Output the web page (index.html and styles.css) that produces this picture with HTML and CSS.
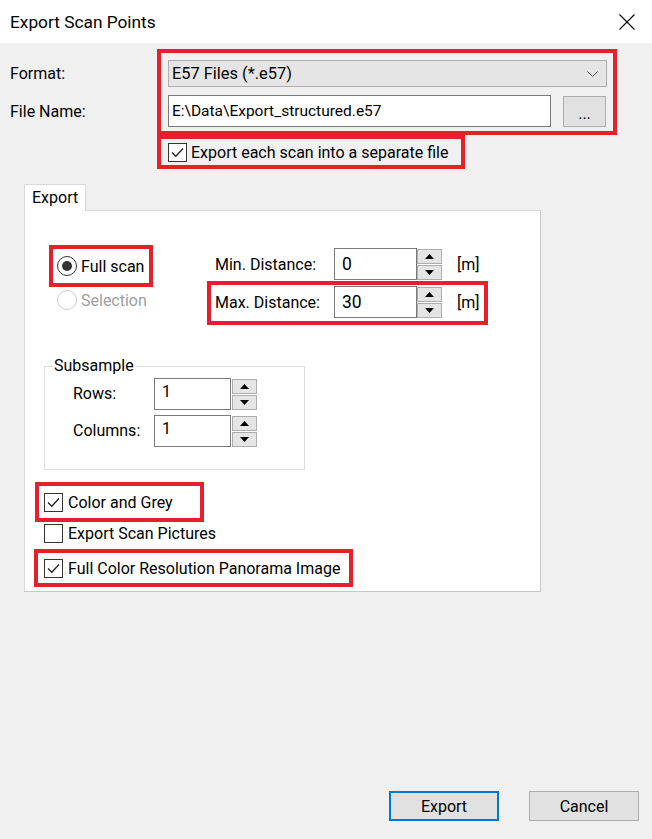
FILE: index.html
```html
<!DOCTYPE html>
<html>
<head>
    <meta charset="UTF-8">
    <title>Export Scan Points</title>
    <link rel="stylesheet" href="styles.css">
</head>
<body>
    <div class="dialog">
        <div class="titlebar">
            <span class="title">Export Scan Points</span>
            <svg class="close-icon" width="16" height="16" viewBox="0 0 16 16">
                <path d="M0.5 0.5 L15.5 15.5 M15.5 0.5 L0.5 15.5" stroke="#000" stroke-width="1.1" fill="none"/>
            </svg>
        </div>

        <!-- format / file name -->
        <div class="file-section">
            <div class="file-labels">
                <div class="field-label combo-h">Format:</div>
                <div class="field-label input-h">File Name:</div>
            </div>
            <div class="hl file-box">
                <div class="combo">
                    <span>E57 Files (*.e57)</span>
                    <svg width="11" height="6" viewBox="0 0 11 6">
                        <path d="M0.5 0.5 L5.5 5.5 L10.5 0.5" stroke="#555" stroke-width="1" fill="none"/>
                    </svg>
                </div>
                <div class="file-row">
                    <div class="textbox file-input">E:\Data\Export_structured.e57</div>
                    <div class="btn browse">...</div>
                </div>
            </div>
        </div>

        <div class="hl separate-box">
            <span class="check">
                <svg width="17" height="17" viewBox="0 0 17 17"><path d="M3 8.5 L6.8 12.3 L14 4.5" stroke="#222" stroke-width="1.3" fill="none"/></svg>
            </span>
            <span>Export each scan into a separate file</span>
        </div>

        <!-- tab -->
        <div class="tabs">
            <div class="tab">Export</div>
        </div>
        <div class="tab-panel">
            <div class="scan-row">
                <div class="scan-mode">
                    <div class="hl mode-box">
                        <span class="radio on"></span>
                        <span>Full scan</span>
                    </div>
                    <div class="mode-row disabled">
                        <span class="radio"></span>
                        <span>Selection</span>
                    </div>
                </div>
                <div class="distances">
                    <div class="dist-row min-row">
                        <span class="dist-label">Min. Distance:</span>
                        <div class="textbox dist-input">0</div>
                        <div class="spin">
                            <span class="spin-btn"><svg width="9" height="5" viewBox="0 0 9 5"><path d="M0 5 L4.5 0 L9 5 Z" fill="#000"/></svg></span>
                            <span class="spin-btn"><svg width="9" height="5" viewBox="0 0 9 5"><path d="M0 0 L4.5 5 L9 0 Z" fill="#000"/></svg></span>
                        </div>
                        <span class="unit">[m]</span>
                    </div>
                    <div class="hl dist-row max-row">
                        <span class="dist-label">Max. Distance:</span>
                        <div class="textbox dist-input">30</div>
                        <div class="spin">
                            <span class="spin-btn"><svg width="9" height="5" viewBox="0 0 9 5"><path d="M0 5 L4.5 0 L9 5 Z" fill="#000"/></svg></span>
                            <span class="spin-btn"><svg width="9" height="5" viewBox="0 0 9 5"><path d="M0 0 L4.5 5 L9 0 Z" fill="#000"/></svg></span>
                        </div>
                        <span class="unit">[m]</span>
                    </div>
                </div>
            </div>

            <fieldset class="subsample">
                <legend>Subsample</legend>
                <div class="sub-row">
                    <span class="sub-label">Rows:</span>
                    <div class="textbox sub-input">1</div>
                    <div class="spin">
                        <span class="spin-btn"><svg width="9" height="5" viewBox="0 0 9 5"><path d="M0 5 L4.5 0 L9 5 Z" fill="#000"/></svg></span>
                        <span class="spin-btn"><svg width="9" height="5" viewBox="0 0 9 5"><path d="M0 0 L4.5 5 L9 0 Z" fill="#000"/></svg></span>
                    </div>
                </div>
                <div class="sub-row">
                    <span class="sub-label">Columns:</span>
                    <div class="textbox sub-input">1</div>
                    <div class="spin">
                        <span class="spin-btn"><svg width="9" height="5" viewBox="0 0 9 5"><path d="M0 5 L4.5 0 L9 5 Z" fill="#000"/></svg></span>
                        <span class="spin-btn"><svg width="9" height="5" viewBox="0 0 9 5"><path d="M0 0 L4.5 5 L9 0 Z" fill="#000"/></svg></span>
                    </div>
                </div>
            </fieldset>

            <div class="hl check-row color-box">
                <span class="check">
                    <svg width="17" height="17" viewBox="0 0 17 17"><path d="M3 8.5 L6.8 12.3 L14 4.5" stroke="#222" stroke-width="1.3" fill="none"/></svg>
                </span>
                <span>Color and Grey</span>
            </div>
            <div class="check-row pictures-row">
                <span class="check"></span>
                <span>Export Scan Pictures</span>
            </div>
            <div class="hl check-row full-box">
                <span class="check">
                    <svg width="17" height="17" viewBox="0 0 17 17"><path d="M3 8.5 L6.8 12.3 L14 4.5" stroke="#222" stroke-width="1.3" fill="none"/></svg>
                </span>
                <span>Full Color Resolution Panorama Image</span>
            </div>
        </div>

        <div class="actions">
            <div class="btn default">Export</div>
            <div class="btn">Cancel</div>
        </div>
    </div>
</body>
</html>
```

FILE: styles.css
```css
body {
    margin: 0;
    background-color: #f0f0f0;
    font-family: Roboto, "Open Sans", sans-serif;
    font-size: 16px;
    color: #000;
    white-space: nowrap;
}

.dialog {
    height: 839px;
    display: flex;
    flex-direction: column;
}

.titlebar {
    height: 43px;
    background-color: #fff;
    display: flex;
    align-items: center;
    justify-content: space-between;
    padding: 0 17px 0 10px;
}

.title {
    font-size: 17.3px;
}

.hl {
    border: 4px solid #e4202a;
    box-sizing: border-box;
}

/* format / file name */
.file-section {
    display: flex;
    margin-top: 6px;
}

.file-labels {
    width: 157px;
    box-sizing: border-box;
    padding: 11px 0 0 10px;
    display: flex;
    flex-direction: column;
    gap: 8px;
}

.field-label {
    display: flex;
    align-items: center;
}

.combo-h {
    height: 27px;
}

.input-h {
    height: 32px;
}

.file-box {
    width: 460px;
    padding: 7px 6px 4px 7px;
    display: flex;
    flex-direction: column;
    gap: 8px;
}

.combo {
    height: 27px;
    box-sizing: border-box;
    border: 1px solid #adadad;
    background-color: #e5e5e5;
    display: flex;
    align-items: center;
    justify-content: space-between;
    padding: 0 8px 0 3px;
    font-size: 16.4px;
}

.file-row {
    display: flex;
    gap: 12px;
    align-items: flex-start;
}

.textbox {
    box-sizing: border-box;
    border: 1px solid #7a7a7a;
    background-color: #fff;
    display: flex;
    align-items: center;
}

.file-input {
    width: 383px;
    height: 32px;
    padding-left: 3px;
    font-size: 15.5px;
}

.btn {
    box-sizing: border-box;
    background-color: #e1e1e1;
    border: 1px solid #adadad;
    display: flex;
    align-items: center;
    justify-content: center;
}

.browse {
    width: 43px;
    height: 31px;
    margin-top: 1px;
    padding-top: 4px;
}

.separate-box {
    margin-left: 157px;
    width: 308px;
    height: 34px;
    padding-left: 7px;
    display: flex;
    align-items: center;
    gap: 4px;
}

.check {
    width: 19px;
    height: 19px;
    box-sizing: border-box;
    border: 1px solid #333;
    background-color: #fff;
    display: flex;
    align-items: center;
    justify-content: center;
    flex-shrink: 0;
}

/* tab */
.tabs {
    display: flex;
    margin-top: 15px;
    padding-left: 24px;
}

.tab {
    width: 62px;
    height: 27px;
    box-sizing: border-box;
    border: 1px solid #d9d9d9;
    border-bottom: none;
    background-color: #fff;
    padding: 3px 0 0 7px;
    margin-bottom: -1px;
    position: relative;
    z-index: 1;
}

.tab-panel {
    margin-left: 24px;
    width: 517px;
    height: 382px;
    box-sizing: border-box;
    background-color: #fff;
    border: 1px solid #d9d9d9;
    border-right-color: #c8c8c8;
    border-bottom-color: #c8c8c8;
}

.scan-row {
    display: flex;
    padding-left: 24px;
}

.scan-mode {
    width: 158px;
    margin-top: 34px;
}

.mode-box {
    width: 104px;
    height: 42px;
    padding-left: 4px;
    display: flex;
    align-items: center;
    gap: 4px;
}

.mode-row {
    margin: 2px 0 0 8px;
    height: 22px;
    display: flex;
    align-items: center;
    gap: 4px;
}

.radio {
    width: 20px;
    height: 20px;
    box-sizing: border-box;
    border-radius: 50%;
    border: 1px solid #333;
    background-color: #fff;
    display: flex;
    align-items: center;
    justify-content: center;
}

.radio.on::after {
    content: "";
    width: 10px;
    height: 10px;
    border-radius: 50%;
    background-color: #333;
}

.disabled {
    color: #a0a0a0;
}

.disabled .radio {
    border-color: #cccccc;
}

.distances {
    margin-top: 37px;
    display: flex;
    flex-direction: column;
}

.dist-row {
    display: flex;
    align-items: center;
}

.min-row {
    height: 32px;
    padding-left: 8px;
}

.max-row {
    margin-top: 1px;
    width: 281px;
    padding: 1px 0 3px 4px;
}

.dist-label {
    width: 119px;
}

.dist-input {
    width: 83px;
    height: 32px;
    padding-left: 7px;
    font-size: 17.5px;
}

.spin {
    width: 25px;
    height: 31px;
    display: flex;
    flex-direction: column;
    gap: 1px;
}

.spin-btn {
    flex: 1;
    box-sizing: border-box;
    border: 1px solid #adadad;
    background-color: #e5e5e5;
    display: flex;
    align-items: center;
    justify-content: center;
}

.unit {
    margin-left: 15px;
}

/* subsample */
.subsample {
    margin: 31px 0 0 19px;
    width: 261px;
    box-sizing: border-box;
    padding: 2px 0 22px 8px;
    border: 1px solid #dcdcdc;
}

.subsample legend {
    padding: 0 1px;
    line-height: 20px;
}

.sub-row {
    display: flex;
    align-items: flex-start;
    padding-left: 20px;
}

.sub-row + .sub-row {
    margin-top: 5px;
}

.sub-label {
    width: 81px;
    line-height: 32px;
}

.sub-input {
    width: 77px;
    height: 32px;
    padding: 0 0 6px 7px;
}

.sub-row .spin {
    margin: 1px 0 0 1px;
}

/* checkboxes */
.check-row {
    display: flex;
    align-items: center;
    gap: 5px;
}

.color-box {
    margin: 12px 0 0 10px;
    width: 169px;
    height: 40px;
    padding-left: 5px;
}

.pictures-row {
    margin: 2px 0 0 19px;
    height: 19px;
}

.full-box {
    margin: 6px 0 0 9px;
    width: 319px;
    height: 38px;
    padding-left: 6px;
}

/* buttons */
.actions {
    margin-top: auto;
    padding: 0 13px 18px 0;
    display: flex;
    justify-content: flex-end;
    gap: 30px;
}

.actions .btn {
    width: 110px;
    height: 30px;
}

.actions .btn.default {
    border: 2px solid #0078d7;
}
```
